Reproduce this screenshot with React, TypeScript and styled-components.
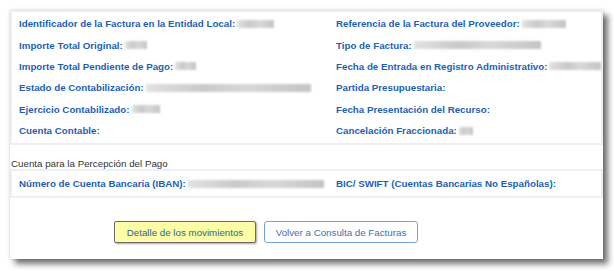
import styled, { createGlobalStyle } from 'styled-components';

const GlobalStyle = createGlobalStyle`
  html, body {
    margin:0;
    padding:0;
    background:#fff;
  }
  body {
    font-family:"Liberation Sans", Arial, sans-serif;
  }
  * {
    box-sizing:border-box;
  }
`

const Page = styled.div`
  min-height:271px;
  padding:10px 0 12px 10px;
  background:#fff;
`
const Card = styled.div`
  display:flex;
  flex-direction:column;
  width:593px;
  height:249px;
  background:#fff;
  box-shadow:0 0 3px rgba(0,0,0,0.18), 5px 5px 6px rgba(0,0,0,0.55);
`
const Panel = styled.div`
  border:2px solid #eaf0f6;
  padding:${p => p.$pad || '0 7px'};
`
const FieldGrid = styled.div`
  display:grid;
  grid-template-columns:317px 1fr;
  grid-auto-rows:${p => p.$row || '21.4px'};
  align-items:center;
`
const Field = styled.div`
  display:flex;
  align-items:center;
  white-space:nowrap;
  font-size:9.75px;
  font-weight:bold;
  color:#1d5fb5;
`
const Redacted = styled.span`
  display:inline-block;
  height:8px;
  margin-left:2px;
  background:linear-gradient(90deg, #e2e2e2 0%, #c9c9c9 35%, #d8d8d8 60%, #c4c4c4 100%);
  filter:blur(1px);
`
const Heading = styled.div`
  font-size:9.75px;
  line-height:12px;
  color:#333;
  padding:13px 0 0 1px;
  height:24px;
`
const ButtonRow = styled.div`
  display:flex;
  gap:8px;
  margin-top:23px;
  padding-left:104px;
`
const Button = styled.button`
  height:22px;
  padding:0;
  font-family:"Liberation Sans", Arial, sans-serif;
  font-size:9.75px;
  cursor:pointer;
`
const YellowButton = styled(Button)`
  width:142px;
  background:#fdfda6;
  border:1px solid #6a6a6a;
  border-radius:2px;
  color:#2f6690;
  box-shadow:1px 1px 2px rgba(0,0,0,0.35);
`
const OutlineButton = styled(Button)`
  width:154px;
  background:#fff;
  border:1px solid #74a3d9;
  border-radius:3px;
  color:#3d72b0;
`

type Item = { label: string, blur?: number }

const left: Item[] = [
  { label: 'Identificador de la Factura en la Entidad Local:', blur: 37 },
  { label: 'Importe Total Original:', blur: 22 },
  { label: 'Importe Total Pendiente de Pago:', blur: 21 },
  { label: 'Estado de Contabilización:', blur: 165 },
  { label: 'Ejercicio Contabilizado:', blur: 28 },
  { label: 'Cuenta Contable:' },
]
const right: Item[] = [
  { label: 'Referencia de la Factura del Proveedor:', blur: 44 },
  { label: 'Tipo de Factura:', blur: 127 },
  { label: 'Fecha de Entrada en Registro Administrativo:', blur: 52 },
  { label: 'Partida Presupuestaria:' },
  { label: 'Fecha Presentación del Recurso:' },
  { label: 'Cancelación Fraccionada:', blur: 14 },
]

function Row({ item }: { item: Item }) {
  return (
    <Field>
      {item.label}
      {item.blur && <Redacted style={{ width: item.blur }} />}
    </Field>
  )
}

export default function App() {
  const cells = left.flatMap((l, i) => [l, right[i]])
  return (
    <Page>
      <GlobalStyle />
      <Card>
        <Panel $pad='1px 7px 2px'>
          <FieldGrid>
            {cells.map((c, i) => <Row key={i} item={c} />)}
          </FieldGrid>
        </Panel>
        <Heading>Cuenta para la Percepción del Pago</Heading>
        <Panel>
          <FieldGrid $row='25px'>
            <Row item={{ label: 'Número de Cuenta Bancaria (IBAN):', blur: 136 }} />
            <Row item={{ label: 'BIC/ SWIFT (Cuentas Bancarias No Españolas):' }} />
          </FieldGrid>
        </Panel>
        <ButtonRow>
          <YellowButton>Detalle de los movimientos</YellowButton>
          <OutlineButton>Volver a Consulta de Facturas</OutlineButton>
        </ButtonRow>
      </Card>
    </Page>
  )
}
